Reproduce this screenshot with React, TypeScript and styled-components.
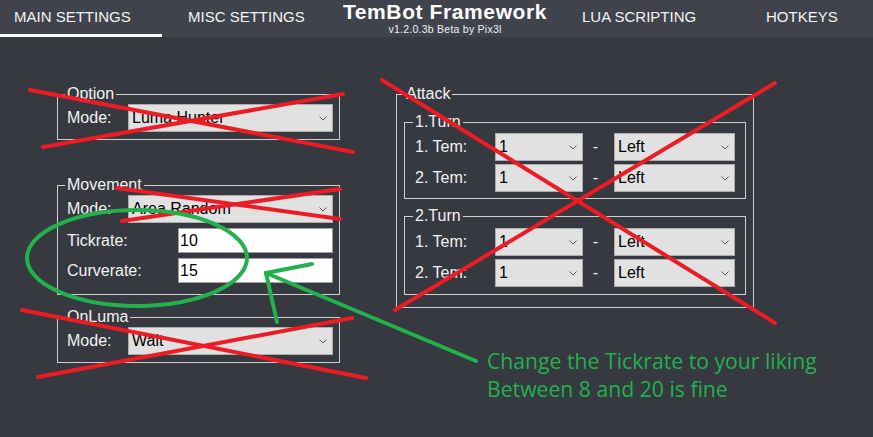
import React from "react";
import styled, { createGlobalStyle } from "styled-components";

const GlobalStyle = createGlobalStyle`
  html, body { margin: 0; padding: 0; background: #363940; }
  body { font-family: "Liberation Sans", Arial, sans-serif; }
  #root { width: 873px; height: 437px; }
`;

const Page = styled.div`
  position: relative;
  width: 873px;
  height: 437px;
  overflow: hidden;
  background: #363940;
  color: #f2f2f2;
  font-family: "Liberation Sans", Arial, sans-serif;
`;

const Header = styled.header`
  display: flex;
  height: 37px;
  background: #40434b;
`;

const Tab = styled.div<{ $w: number; $pl: number; $active?: boolean }>`
  box-sizing: border-box;
  flex: none;
  width: ${(p) => p.$w}px;
  height: 37px;
  padding: 8px 0 0 ${(p) => p.$pl}px;
  font-size: 15px;
  line-height: 17px;
  color: #f4f4f4;
  white-space: nowrap;
  border-bottom: 3px solid ${(p) => (p.$active ? "#ffffff" : "transparent")};
`;

const TitleBlock = styled.div`
  flex: none;
  width: 226px;
  display: flex;
  flex-direction: column;
  align-items: center;
`;

const Title = styled.div`
  font-size: 21px;
  line-height: 23.5px;
  letter-spacing: 0.6px;
  font-weight: bold;
  color: #ffffff;
  white-space: nowrap;
`;

const Version = styled.div`
  font-size: 10.5px;
  line-height: 11.75px;
  letter-spacing: 0.25px;
  color: #f0f0f0;
  white-space: nowrap;
`;

const Main = styled.main`
  display: flex;
  align-items: flex-start;
  gap: 56px;
  padding: 48px 0 0 57px;
`;

const Column = styled.div<{ $w: number }>`
  width: ${(p) => p.$w}px;
  display: flex;
  flex-direction: column;
`;

const Group = styled.fieldset<{ $mt?: number; $pad: string }>`
  margin: ${(p) => p.$mt ?? 0}px 0 0 0;
  padding: ${(p) => p.$pad};
  border: 1px solid #cfcfcf;
  min-width: 0;
`;

const Legend = styled.legend<{ $shift?: number }>`
  margin-left: ${(p) => p.$shift ?? -2}px;
  padding: 0 2px;
  font-size: 16px;
  line-height: 18px;
  color: #f2f2f2;
`;

const Stack = styled.div<{ $gap: number }>`
  display: flex;
  flex-direction: column;
  gap: ${(p) => p.$gap}px;
`;

const Row = styled.div`
  display: flex;
  align-items: center;
`;

const Label = styled.span<{ $w: number }>`
  flex: none;
  width: ${(p) => p.$w}px;
  font-size: 16px;
  color: #f2f2f2;
  white-space: nowrap;
`;

const Combo = styled.div<{ $w: number }>`
  box-sizing: border-box;
  flex: none;
  width: ${(p) => p.$w}px;
  height: 28px;
  display: flex;
  align-items: center;
  justify-content: space-between;
  padding: 0 5px 0 3px;
  background: #e1e1e1;
  border: 1px solid #adadad;
  color: #000000;
  font-size: 16px;
  white-space: nowrap;
`;

const TextBox = styled.input`
  box-sizing: border-box;
  flex: none;
  width: 155px;
  height: 25px;
  margin: 0;
  padding: 0 0 0 1px;
  border: 1px solid #a0a0a0;
  background: #ffffff;
  color: #000000;
  font-family: "Liberation Sans", Arial, sans-serif;
  font-size: 16px;
  outline: none;
`;

const Dash = styled.span`
  flex: none;
  box-sizing: border-box;
  width: 31px;
  padding-right: 6px;
  text-align: center;
  font-size: 16px;
  color: #f2f2f2;
`;

const Overlay = styled.svg`
  position: absolute;
  left: 0;
  top: 0;
  pointer-events: none;
`;

const Note = styled.div`
  position: absolute;
  left: 487px;
  top: 347px;
  font-family: "Open Sans", "Noto Sans", sans-serif;
  font-size: 21.2px;
  line-height: 28px;
  color: #22b14c;
  white-space: nowrap;
`;

const Chevron = () => (
  <svg width="8" height="5" viewBox="0 0 8 5">
    <path d="M0.5 0.5 L4 4 L7.5 0.5" fill="none" stroke="#5a5a5a" strokeWidth="1" />
  </svg>
);

const Select = ({ w, value }: { w: number; value: string }) => (
  <Combo $w={w}>
    <span>{value}</span>
    <Chevron />
  </Combo>
);

const TemRow = ({ n }: { n: number }) => (
  <Row>
    <Label $w={80}>{n}. Tem:</Label>
    <Select w={88} value="1" />
    <Dash>-</Dash>
    <Select w={121} value="Left" />
  </Row>
);

const Turn = ({ title, mt, pad }: { title: string; mt: number; pad: string }) => (
  <Group $mt={mt} $pad={pad}>
    <Legend>{title}</Legend>
    <Stack $gap={3}>
      <TemRow n={1} />
      <TemRow n={2} />
    </Stack>
  </Group>
);

const RED = "#ed1c24";
const GREEN = "#22b14c";

export default function App() {
  return (
    <Page>
      <GlobalStyle />
      <Header>
        <Tab $w={162} $pl={14} $active>MAIN SETTINGS</Tab>
        <Tab $w={170} $pl={26}>MISC SETTINGS</Tab>
        <TitleBlock>
          <Title>TemBot Framework</Title>
          <Version>v1.2.0.3b Beta by Pix3l</Version>
        </TitleBlock>
        <Tab $w={180} $pl={24}>LUA SCRIPTING</Tab>
        <Tab $w={135} $pl={28}>HOTKEYS</Tab>
      </Header>
      <Main>
        <Column $w={283}>
          <Group $pad="1px 6px 7px 9px">
            <Legend>Option</Legend>
            <Row>
              <Label $w={61}>Mode:</Label>
              <Select w={205} value="Luma Hunter" />
            </Row>
          </Group>
          <Group $mt={36} $pad="1px 6px 11px 9px">
            <Legend>Movement</Legend>
            <Stack $gap={5}>
              <Row>
                <Label $w={61}>Mode:</Label>
                <Select w={205} value="Area Random" />
              </Row>
              <Row>
                <Label $w={111}>Tickrate:</Label>
                <TextBox defaultValue="10" />
              </Row>
              <Row>
                <Label $w={111}>Curverate:</Label>
                <TextBox defaultValue="15" />
              </Row>
            </Stack>
          </Group>
          <Group $mt={13} $pad="1px 6px 7px 9px">
            <Legend>OnLuma</Legend>
            <Row>
              <Label $w={61}>Mode:</Label>
              <Select w={205} value="Wait" />
            </Row>
          </Group>
        </Column>
        <Column $w={358}>
          <Group $pad="0 7px 12px 7px">
            <Legend $shift={0}>Attack</Legend>
            <Turn title="1.Turn" mt={10} pad="2px 9px 6px 10px" />
            <Turn title="2.Turn" mt={8} pad="3px 9px 7px 10px" />
          </Group>
        </Column>
      </Main>

      <Overlay width="873" height="437" viewBox="0 0 873 437">
        <g stroke={RED} strokeWidth="4" strokeLinecap="round" fill="none">
          <line x1="30" y1="90" x2="353" y2="152" />
          <line x1="43" y1="147" x2="343" y2="94" />
          <line x1="117" y1="188" x2="340" y2="219" />
          <line x1="122" y1="221" x2="340" y2="189" />
          <line x1="22" y1="310" x2="366" y2="378" />
          <line x1="352" y1="318" x2="38" y2="377" />
          <line x1="382" y1="80" x2="775" y2="323" />
          <line x1="775" y1="83" x2="395" y2="310" />
        </g>
        <g stroke={GREEN} strokeWidth="4" strokeLinecap="round" fill="none">
          <ellipse cx="137" cy="258" rx="110" ry="48" />
          <line x1="266" y1="273" x2="476" y2="361" />
          <line x1="266" y1="273" x2="312" y2="264" />
          <line x1="266" y1="273" x2="277" y2="322" />
        </g>
      </Overlay>
      <Note>
        Change the Tickrate to your liking
        <br />
        Between 8 and 20 is fine
      </Note>
    </Page>
  );
}
